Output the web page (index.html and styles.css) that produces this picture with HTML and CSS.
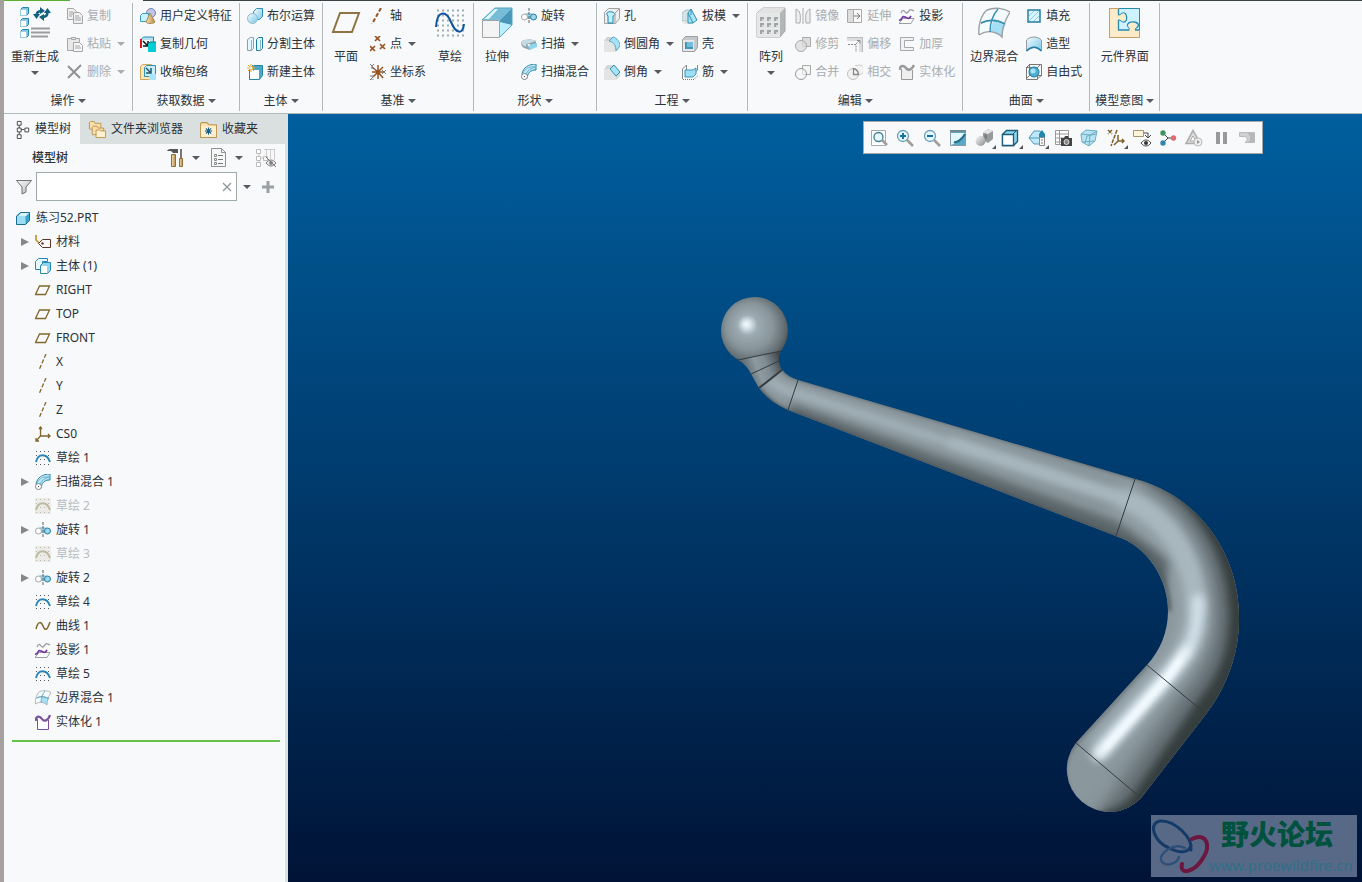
FILE: index.html
```
<!doctype html>
<html lang="zh-CN">
  <head>
    <meta charset="utf-8">
    <title>练习52.PRT</title>
    <link rel="stylesheet" href="styles.css">
  </head>
  <body>
    <svg class="sprite" aria-hidden="true">
      <defs>
        <linearGradient id="g-blue" x1="0" y1="0" x2="1" y2="1">
          <stop offset="0" stop-color="#f2fbff"/><stop offset="1" stop-color="#7cc8e6"/>
        </linearGradient>
        <linearGradient id="g-gray" x1="0" y1="0" x2="1" y2="1">
          <stop offset="0" stop-color="#fafafa"/><stop offset="1" stop-color="#b4b8ba"/>
        </linearGradient>
        <linearGradient id="g-metal" x1="0" y1="0" x2="1" y2="1">
          <stop offset="0" stop-color="#fafafa"/><stop offset="1" stop-color="#85898b"/>
        </linearGradient>
        <linearGradient id="g-tan" x1="0" y1="0" x2="1" y2="0">
          <stop offset="0" stop-color="#f6e2b8"/><stop offset="1" stop-color="#b58b49"/>
        </linearGradient>
      </defs>

      <!-- 32px ribbon icons -->
      <symbol id="i-regen" viewBox="0 0 32 32">
        <g stroke="#2387ae"><path d="M1.500 2.500l2-2h6v6l-2 2h-6zM1.500 13.500l2-2h6v6l-2 2h-6zM1.500 24.500l2-2h6v6l-2 2h-6z" fill="#7cc6e2"/><path d="M1.500 2.500h6v6h-6zM1.500 13.500h6v6h-6zM1.500 24.500h6v6h-6z" fill="#fff" stroke="#9bcbdc"/></g>
        <g fill="none" stroke="#12607f" stroke-width="2.500"><path d="M17.500 9c0-4 2-5 5-5"/><path d="M28.500 5c0 4-2 5-5 5"/></g>
        <path d="M14 7h7l-3.500 5zM25 6h7l-3.500-5zM21 0l5 4-5 3zM25 7v7l-5-4z" fill="#12607f"/>
        <path d="M12 21.500h19M12 25.500h19M12 29.500h17" stroke="#9c9c9c" stroke-width="2"/>
      </symbol>
      <symbol id="i-plane" viewBox="0 0 32 32"><path d="M10 6h19l-7 19H3z" fill="none" stroke="#8f7443" stroke-width="2"/></symbol>
      <symbol id="i-sketch" viewBox="0 0 32 32">
        <path d="M3 3.500h28M3 8.500h28M3 13.500h28M3 18.500h28M3 23.500h28M3 28.500h28" stroke="#9fadb0" stroke-width="2" stroke-dasharray="2 3"/>
        <path d="M2 20C3 3 12 3 17 15s12 13 13 2" fill="none" stroke="#10549f" stroke-width="2"/>
      </symbol>
      <symbol id="i-extrude" viewBox="0 0 32 32">
        <path d="M1 13L14 1h17v17L19 30z" fill="#d9f7ff"/><path d="M1 13L14 1h17L19 13z" fill="#78bdd7"/><path d="M31 1v17L19 30V13z" fill="#4897b8"/><path d="M19 30l12-12L19 15z" fill="#b9efff"/><path d="M3 12L14 2h3L8 12z" fill="#ddf8ff"/>
        <path d="M1.500 13.500h17v17h-17z" fill="#f4f4f4" stroke="#a4a4a4"/><path d="M1 13L14 1h17v17L19 30" fill="none" stroke="#53a5c5"/>
      </symbol>
      <symbol id="i-pattern" viewBox="0 0 32 32">
        <path d="M2 6l6-5h22v23l-5 6H2z" fill="#b4b7b8" stroke="#a4a7a8"/><path d="M2 6l6-5h22l-5 5z" fill="#e2e2e2"/><path d="M2 6h23v24H2z" fill="#e6e7e7"/>
        <path d="M5 12h18M5 18h18M5 25h18" stroke="#a2a5a6" stroke-width="4" stroke-dasharray="4 3"/><path d="M7 13h16M7 19h16M7 26h16" stroke="#d6d6d6" stroke-width="2" stroke-dasharray="2 5"/>
      </symbol>
      <symbol id="i-boundary" viewBox="0 0 32 32">
        <path d="M9 3c8-3 17-2 23 2-5 8-8 16-8 25-5-5-15-8-24-2C-1 18 3 8 9 3z" fill="#f4fbfe"/>
        <path d="M15 14c5 0 9 1 13 3-3 5-4 9-4 13-3-3-7-5-12-5z" fill="#a6def5"/>
        <path d="M9 3c8-3 17-2 23 2M9 3C3 8 0 18 1 28M3 16c8-4 17-3 24 1M1 28c9-6 18-3 23 2 0-9 3-17 8-25" fill="none" stroke="#9b9fa1" stroke-width="1.400"/><path d="M20 2c-6 7-8 15-8 23M3 16c8-4 17-3 24 1" fill="none" stroke="#2f91b6" stroke-width="1.400"/>
      </symbol>
      <symbol id="i-puzzle" viewBox="0 0 32 32">
        <path d="M.500 1.500h30v29H.500z" fill="#fcebc8" stroke="#c3a066"/><path d="M9 1.500h21.500V23H9z" fill="#cef2ff"/>
        <path d="M9.500 1.500V8c2 1 3-3 6-2 3 2 3 9-1 9-2 0-3-3-5-2v10h11c1-3-2-2-2-5 1-4 10-4 11 0 0 3-4 2-3 5h3.500" fill="none" stroke="#2589b1" stroke-width="1.300"/>
        <path d="M9 8.500c2 1 4-3 6-2 3 2 2 8-1 8-2 0-3-3-5-2zM20 23.500c2-3-1-3-1-5 1-4 8-4 9 0 0 2-3 3-2 5z" fill="#fcebc8"/>
        <path d="M.500 1.500h30v29H.500z" fill="none" stroke="#c3a066"/><path d="M10 1.500h20.500V23" fill="none" stroke="#2589b1"/>
      </symbol>

      <!-- 16px ribbon icons -->
      <symbol id="i-copy" viewBox="0 0 16 16"><g fill="#f0f0f0" stroke="#a6a6a6"><path d="M.500.500h6l3 3v8h-9z"/><path d="M6.500 4.500h6l3 3v8h-9z"/></g><path d="M2 4h4M2 6h4M2 8h3M8 8h4M8 10h6M8 12h6" stroke="#a6a6a6"/></symbol>
      <symbol id="i-paste" viewBox="0 0 16 16"><g fill="#e8e8e8" stroke="#a6a6a6"><path d="M.500 2.500h12v12H.500z"/><path d="M4.500 3.500v-2h4v2z"/><path d="M6.500 6.500h6l3 3v6h-9z" fill="#f7f7f7"/></g><path d="M8 10h5M8 12h6" stroke="#a6a6a6"/></symbol>
      <symbol id="i-delete" viewBox="0 0 16 16"><path d="M1 2l12 12M14 1L1 14" stroke="#929292" stroke-width="2"/></symbol>
      <symbol id="i-udf" viewBox="0 0 16 16"><circle cx="11" cy="5" r="4.500" fill="#c0c6e8" stroke="#7680b0"/><path d="M.500 7.500l2-2h6v6l-2 2h-6z" fill="#c8f1ff" stroke="#3b9bbf"/><path d="M10 5l5 9c-2 2-8 2-9 0z" fill="url(#g-tan)" stroke="#ac8a52"/></symbol>
      <symbol id="i-copygeom" viewBox="0 0 16 16"><path d="M.500 4l3-3h10v5" fill="#b7dfef" stroke="#278daf"/><path d="M2 4h8v8H2z" fill="#ebfaff"/><path d="M1 3v9" stroke="#e01414" stroke-width="2"/><path d="M3 5l4 4M8 5v5H3" stroke="#111" stroke-width="1.500" fill="none"/><path d="M8 8l2-2h6v10H8z" fill="#00cdd4"/><path d="M8 8l2-2h6" fill="none" stroke="#007c8a"/></symbol>
      <symbol id="i-shrink" viewBox="0 0 16 16"><path d="M.500 2.500l2-2h9v13l-2 2h-9z" fill="#fae8bd" stroke="#d2a857"/><path d="M4.500 3.500l2-2h9v9l-2 2h-9z" fill="#c9eefb" stroke="#338fb2"/><path d="M6 4l4 4M11 4v5H6" stroke="#205770" stroke-width="1.500" fill="none"/><path d="M9 12l2-2h5v6H9z" fill="#a9e3fb"/></symbol>
      <symbol id="i-bool" viewBox="0 0 16 16"><path d="M6.500 3.500l3-3h6v8l-3 3h-6z" fill="url(#g-blue)" stroke="#2b8fb3"/><circle cx="5.500" cy="10.500" r="5" fill="url(#g-blue)" stroke="#8ebacb"/></symbol>
      <symbol id="i-split" viewBox="0 0 16 16"><path d="M.500 3.500l3-2h3v11l-2 2h-4z" fill="#e2f7ff" stroke="#909fa6"/><path d="M9.500 3.500l2-2h4v11l-2 2h-4z" fill="#e2f9ff" stroke="#1c7da2"/><path d="M13.500 4v11M4.500 4v11" stroke="#8eb4c2"/></symbol>
      <symbol id="i-newbody" viewBox="0 0 16 16"><path d="M2.500 5.500l3-4h10v10l-3 4h-10z" fill="#4fa5c4" stroke="#2387ab"/><path d="M3 6h9v9H3z" fill="#fff"/><path d="M4 0v8M0 4h8M1 1l6 6M7 1L1 7" stroke="#f4a51c"/><circle cx="4" cy="4" r="1.500" fill="#fff3c9"/></symbol>
      <symbol id="i-axis" viewBox="0 0 16 16"><path d="M11 0L2 16" stroke="#975321" stroke-width="2" stroke-dasharray="4 2"/></symbol>
      <symbol id="i-point" viewBox="0 0 16 16"><path d="M5 0l5 5m0-5L5 5M0 10l5 5m0-5l-5 5M10 8l5 5m0-5l-5 5" stroke="#975321" stroke-width="1.700"/></symbol>
      <symbol id="i-csys" viewBox="0 0 16 16"><path d="M8 1v14M8 8l-6-5M2 8h11M8 8l5-5M8 8l-5 5M8 8l5 6" stroke="#975321" stroke-width="1.500" fill="none"/><path d="M0 0l2 2 2-2M2 2v3M12 6l4 4m0-4l-4 4M0 12h4l-4 4h4" stroke="#77797b" fill="none"/></symbol>
      <symbol id="i-revolve" viewBox="0 0 16 16"><path d="M3 7c2-3 8-3 11 1v3H3z" fill="#95d3e9"/><circle cx="3.500" cy="9" r="3" fill="#fff" stroke="#a5a8a9"/><circle cx="12.500" cy="9" r="3" fill="#9dd7ed" stroke="#2d7c9d"/><path d="M8 0v16" stroke="#5c6467" stroke-dasharray="3 1"/></symbol>
      <symbol id="i-sweep" viewBox="0 0 16 16"><path d="M0 6c4-3 9-3 15-1v3l-5 1c-4-3-5 0-1 2v3L3 12C0 10 0 8 0 6z" fill="#8ea5ad"/><path d="M0 6c4-3 9-3 15-1l-6 2C5 7 4 9 6 11 2 10 0 8 0 6z" fill="#c6dbe2"/><path d="M7 10l9-3v4l-7 3z" fill="#8dd6ee"/></symbol>
      <symbol id="i-sweepblend" viewBox="0 0 16 16"><path d="M1 10C2 4 7 0 15 0v6c-6 0-8 3-9 8z" fill="url(#g-blue)" stroke="#2d89ad"/><path d="M2 9c2-4 6-7 12-6M5 11c1-4 4-7 10-8" fill="none" stroke="#6fb6d0"/><circle cx="3.500" cy="12.500" r="3" fill="#fff" stroke="#7c878b"/><path d="M3 12h1v1H3z" fill="#555"/></symbol>
      <symbol id="i-hole" viewBox="0 0 16 16"><path d="M.500 4.500l4-4h11v10l-4 5h-11z" fill="#eee" stroke="#9da2a4"/><path d="M4 15V8c-3-3 0-5 4-4s3 4 1 4v7z" fill="#bdefff" stroke="#2386aa"/><path d="M11 5v10M11 5l4-4" stroke="#9da2a4"/></symbol>
      <symbol id="i-round" viewBox="0 0 16 16"><path d="M0 5h7c4 1 5 5 5 11H0z" fill="#e4e5e5"/><path d="M0 5l3-4h6L6 5z" fill="#cdd2d4"/><path d="M9 1c4 1 7 5 7 9l-4 5C12 9 10 6 5 5z" fill="#a9e2f6"/><path d="M12 15l4-5M5 5l4-4c4 1 7 5 7 9M5 5c5 1 7 5 7 10" fill="none" stroke="#54a5c3"/></symbol>
      <symbol id="i-chamfer" viewBox="0 0 16 16"><path d="M0 5h5l7 7v4H0z" fill="#e3e5e5"/><path d="M0 5l3-4h6l7 6v5l-4 4v-5L6 5z" fill="#d2d8da"/><path d="M6 5l4-4 6 7-4 4z" fill="#a9e3f7" stroke="#318eb0"/></symbol>
      <symbol id="i-draft" viewBox="0 0 16 16"><path d="M0 5l4-3h5v11H0z" fill="#d6e2e6" stroke="#9fc3d0"/><path d="M0 13h8l3 3H3z" fill="#dfe1e2"/><path d="M9 1l6 11-4 3H6V5z" fill="#a5e3f8" stroke="#318eb0"/><path d="M6 5l5 10M9 1v6" fill="none" stroke="#318eb0"/></symbol>
      <symbol id="i-shell" viewBox="0 0 16 16"><path d="M.500 3.500l3-3h12v11l-3 4h-12z" fill="#c4c8ca" stroke="#9b9fa1"/><path d="M1 4h11v11H1z" fill="#e6e7e7"/><path d="M3 6h8v7H3z" fill="#4596b5"/><path d="M5 6h6v5H5z" fill="#71bdda"/></symbol>
      <symbol id="i-rib" viewBox="0 0 16 16"><path d="M.500 15V5l4-4v9h7l4-4V1" fill="none" stroke="#85898b"/><path d="M3 6h8l3-2v6l-3 3H3z" fill="#9cdff6" stroke="#3994b6"/><path d="M1 15.500h11l4-4" fill="none" stroke="#777" stroke-dasharray="1 1"/></symbol>
      <symbol id="i-mirror" viewBox="0 0 16 16"><path d="M8 0v16" stroke="#aaa"/><path d="M1 1c4 2 5 5 4 14H1zM15 1c-4 2-5 5-4 14h4z" fill="#eee" stroke="#aaa"/></symbol>
      <symbol id="i-trim" viewBox="0 0 16 16"><path d="M7.500 1.500h8v9h-8z" fill="#ddd" stroke="#aaa"/><circle cx="6" cy="10" r="5.500" fill="#ddd" fill-opacity=".8" stroke="#aaa"/></symbol>
      <symbol id="i-merge" viewBox="0 0 16 16"><path d="M7.500 1.500h8v9h-8z" fill="#f5f5f5" stroke="#aaa"/><circle cx="6" cy="10" r="5.500" fill="#f5f5f5" fill-opacity=".6" stroke="#999"/></symbol>
      <symbol id="i-extend" viewBox="0 0 16 16"><path d="M.500 1.500h14v13H.500z" fill="#f8f8f8" stroke="#aaa"/><path d="M1 2h5v12H1z" fill="#ddd"/><path d="M6.500 2v12" stroke="#aaa"/><path d="M7 8h6m-3-3l3 3-3 3" fill="none" stroke="#777"/></symbol>
      <symbol id="i-offset" viewBox="0 0 16 16"><path d="M0 1h16v15h-4V5H0z" fill="#ddd"/><path d="M15.500 1v15M0 1.500h16" stroke="#bbb"/><path d="M1 8.500h8V16M9 8l4-4" fill="none" stroke="#888" stroke-dasharray="2 1"/><path d="M10 4.500h3v3" fill="none" stroke="#888"/></symbol>
      <symbol id="i-intersect" viewBox="0 0 16 16"><path d="M8 1.500h3a4 4 0 0 1 4 8L12 11" fill="#f2f2f2" stroke="#ccc"/><circle cx="6" cy="10" r="5.500" fill="#f2f2f2" stroke="#c0c0c0"/><path d="M6.500 4.500v6h5C11 7 9 5 6.500 4.500z" fill="#f7f7f7" stroke="#888" stroke-width="1.300"/></symbol>
      <symbol id="i-project" viewBox="0 0 16 16"><path d="M2 5c3-7 4 3 7-1s3-2 6-1" fill="none" stroke="#9b9fa1" stroke-width="1.300"/><path d="M4 10.500h11l-3 5H0z" fill="#fafafa" stroke="#9b9fa1"/><path d="M0 12c4 1 2-5 6-3s4 2 6-1" fill="none" stroke="#7135a0" stroke-width="1.700"/></symbol>
      <symbol id="i-thicken" viewBox="0 0 16 16"><path d="M1.500 1.500h13v3h-9v7h9v3h-13z" fill="#f3f3f3" stroke="#a8a8a8"/></symbol>
      <symbol id="i-solidify" viewBox="0 0 16 16"><path d="M2.500 5v10.500h11V6" fill="#eee" stroke="#999"/><path d="M.500 6C1 1 5 1 7 4s6 2 8-3" fill="none" stroke="#999" stroke-width="2.500"/></symbol>
      <symbol id="i-fill" viewBox="0 0 16 16"><path d="M2 2h12v12H2z" fill="#dcf6ff" stroke="#277ca0" stroke-width="1.500"/><path d="M3 8l5-5M3 13L13 3M8 13l5-5" stroke="#86cce6"/></symbol>
      <symbol id="i-style" viewBox="0 0 16 16"><path d="M.500 4c4-4 11-4 15 0v11c-4-5-10-5-15 0z" fill="url(#g-blue)" stroke="#969c9f"/><path d="M.500 15c5-5 10-5 15 0" fill="none" stroke="#237fa4" stroke-width="1.500"/></symbol>
      <symbol id="i-freestyle" viewBox="0 0 16 16"><path d="M.500 3.500h11v12H.500zM3.500.500h12v11h-12z" fill="#f6f6f6" fill-opacity=".5" stroke="#777"/><circle cx="8" cy="8" r="5" fill="#4eafcf" stroke="#237fa4"/><circle cx="7" cy="7" r="2.500" fill="#a9e4f5"/><path d="M0 4l4-4M11 15l5-4M0 15l4-4M11 4l4-4" stroke="#777"/></symbol>

      <!-- model tree icons -->
      <symbol id="i-tree" viewBox="0 0 15 20"><path d="M3.500 5v10M3 10h6" stroke="#444"/><path d="M1.500 1.500h4v4h-4zM1.500 8.500h4v4h-4zM9.500 8.500h4v4h-4zM1.500 15.500h4v4h-4z" fill="#fff" stroke="#444"/></symbol>
      <symbol id="i-folders" viewBox="0 0 20 20"><g fill="#fbdfaa" stroke="#bd9550"><path d="M1.500 9.500v-7l1-1h4l1 2h6v7z"/><path d="M4.500 13.500v-6l1-1h4l1 2h6v7h-12z"/><path d="M8.500 18.500v-8h4l1 1h5v7z" fill="#fff0cf"/></g></symbol>
      <symbol id="i-fav" viewBox="0 0 18 18"><path d="M1.500 16.500v-13l1-1h5l2 2h7v12z" fill="#fbe3b5" stroke="#bd9550"/><path d="M2 6h14v10H2z" fill="#fff0d0"/><path d="M9 7v7M5.500 10.500h7M6.500 8l5 5M11.500 8l-5 5" stroke="#135f8a"/></symbol>
      <symbol id="i-tools" viewBox="0 0 18 20"><path d="M0 3c1-2 3-2 5-2h6v4H6L4 3z" fill="#555"/><path d="M4.500 6.500h4v12h-4z" fill="url(#g-tan)" stroke="#926d35"/><path d="M14 1v9" stroke="#777" stroke-width="2"/><path d="M12.500 10.500h3v8h-3z" fill="url(#g-tan)" stroke="#926d35"/></symbol>
      <symbol id="i-settings" viewBox="0 0 18 20"><path d="M1.500.500h10l4 4v14h-14z" fill="#f6f7f7" stroke="#8c9193"/><path d="M11.500.500v4h4" fill="none" stroke="#8c9193"/><path d="M8 7.500h5M8 11.500h5M8 15.500h5" stroke="#777"/><path d="M4.500 6.500h2v2h-2zM4.500 10.500h2v2h-2zM4.500 14.500h2v2h-2z" fill="none" stroke="#888"/></symbol>
      <symbol id="i-hide" viewBox="0 0 20 20"><path d="M3 5v12M3 10h5M8 1.500h11M10.500 2v6M14.500 2v9M18.500 2v10" stroke="#ccc" fill="none"/><path d="M.500 1.500h4v4h-4zM.500 8.500h4v4h-4zM.500 14.500h4v4h-4zM7.500 8.500h4v4h-4z" fill="#fff" stroke="#bbb"/><path d="M10 15c3-4 7-4 10 0-3 4-7 4-10 0z" fill="#eee" stroke="#777"/><circle cx="15" cy="15" r="2" fill="#888"/><path d="M10 9l10 10" stroke="#777"/></symbol>
      <symbol id="i-filter" viewBox="0 0 16 16"><path d="M.500 1.500h15L10 8v5l-4 2V8z" fill="url(#g-gray)" stroke="#6e7375"/></symbol>
      <symbol id="i-part" viewBox="0 0 16 16"><path d="M1.500 6l4-3.500h9v8l-4 4h-9z" fill="#38a4ce" stroke="#1a6c90"/><path d="M2 6h8.500v8H2z" fill="#9eddf6"/><path d="M3 6l3-3h8l-3 3z" fill="#d7f3ff"/></symbol>
      <symbol id="i-material" viewBox="0 0 16 16"><path d="M1 1v5l3 3" fill="none" stroke="#bf972f" stroke-width="1.700"/><path d="M3.500 9.500l4-4h8v8h-8z" fill="#fffafa" stroke="#5b3730"/><circle cx="7.500" cy="9.500" r="1.200" fill="#5b3730"/></symbol>
      <symbol id="i-bodies" viewBox="0 0 16 16"><path d="M.500 3.500l3-3h9v3h-5v8h-7z" fill="#e6f8ff" stroke="#2988ad"/><path d="M5.500 7.500l3-3h7v8l-3 3h-7z" fill="#91d4ed" stroke="#2988ad"/><path d="M6 8h6v7H6z" fill="#fff"/></symbol>
      <symbol id="i-dplane" viewBox="0 0 16 16"><path d="M4.500 4h10l-4 8.500h-10z" fill="none" stroke="#80672d" stroke-width="1.300"/></symbol>
      <symbol id="i-daxis" viewBox="0 0 16 16"><path d="M11 0L4 16" stroke="#80672d" stroke-width="1.300" stroke-dasharray="4 2"/></symbol>
      <symbol id="i-dcsys" viewBox="0 0 16 16"><path d="M5.500 1v9H15M5.500 10L1 15M4 3l1.500-2L7 3M13 8l2 2-2 2M1 12v3h3" fill="none" stroke="#80672d" stroke-width="1.300"/></symbol>
      <symbol id="i-dsketch" viewBox="0 0 16 16"><path d="M1 1.500h15M1 5.500h15M1 9.500h15M1 14.500h15" stroke="#555" stroke-dasharray="1 3"/><path d="M1 12C3 3 12 3 15 12" fill="none" stroke="#2b87b2" stroke-width="2"/></symbol>
      <symbol id="i-dsketch-off" viewBox="0 0 16 16"><path d="M0 0h16v16H0z" fill="#ecebe8"/><path d="M1 1.500h15M1 5.500h15M1 9.500h15M1 14.500h15" stroke="#b9b7a9" stroke-dasharray="1 3"/><path d="M1 12C3 3 12 3 15 12" fill="none" stroke="#bcb9a0" stroke-width="2"/></symbol>
      <symbol id="i-curve" viewBox="0 0 16 16"><path d="M1 11C3 3 6 3 8 8s4 5 7-4" fill="none" stroke="#80672d" stroke-width="1.500"/></symbol>
      <symbol id="i-dsolid" viewBox="0 0 16 16"><path d="M2.500 5v10.500h11V6" fill="#fff" stroke="#7a519b"/><path d="M.500 7C1 1 5 2 7 5s6 2 8-4" fill="none" stroke="#7a519b" stroke-width="2.200"/></symbol>

      <!-- view toolbar icons -->
      <symbol id="v-refit" viewBox="0 0 18 18"><path d="M1.500 1.500h14v15h-14z" fill="#fff" stroke="#aaa"/><circle cx="8.500" cy="8" r="4.500" fill="#eaf8fd" stroke="#397e98" stroke-width="1.300"/><path d="M12 11l5 5" stroke="#a19c96" stroke-width="2.500"/></symbol>
      <symbol id="v-in" viewBox="0 0 18 18"><path d="M11 11l6 6" stroke="#a19c96" stroke-width="2.500"/><circle cx="7" cy="7" r="5.500" fill="#e4f7ff" stroke="#6fa0b3" stroke-width="1.300"/><path d="M4 7h6M7 4v6" stroke="#1673a0" stroke-width="2"/></symbol>
      <symbol id="v-out" viewBox="0 0 18 18"><path d="M11 11l6 6" stroke="#a19c96" stroke-width="2.500"/><circle cx="7" cy="7" r="5.500" fill="#e4f7ff" stroke="#6fa0b3" stroke-width="1.300"/><path d="M4 7h6" stroke="#1673a0" stroke-width="2"/></symbol>
      <symbol id="v-repaint" viewBox="0 0 18 18"><path d="M1.500 1.500h15v15h-15z" fill="#5ba9c5" stroke="#8a9ca3"/><path d="M2 4h14C14 9 11 13 2 16z" fill="#e3f7ff"/><path d="M1 2h16" stroke="#72898f" stroke-width="2"/><path d="M5 13c2 1 8-2 11-8" fill="none" stroke="#1c6b8c" stroke-width="2"/></symbol>
      <symbol id="v-shade" viewBox="0 0 18 18"><path d="M8 4l5-4 5 2v8l-5 4-5-3z" fill="#989b9d"/><path d="M8 4l5-4 5 2-5 3z" fill="#e3e4e4"/><path d="M10 4c4 3 2 8-3 10z" fill="#7c8082"/><circle cx="5.500" cy="12" r="5" fill="url(#g-metal)"/></symbol>
      <symbol id="v-box" viewBox="0 0 18 18"><path d="M1.500 5.500l4-4h11v11l-4 4h-11z" fill="#8fd4ee" stroke="#195b79" stroke-width="1.300"/><path d="M1.500 5.500h11v11h-11z" fill="#fff" stroke="#195b79" stroke-width="1.300"/><path d="M12 5l4-4" stroke="#195b79"/></symbol>
      <symbol id="v-style" viewBox="0 0 18 18"><path d="M1 9l5-7h6l4 5-2 8H6z" fill="#bfe9fa" stroke="#4b9aba"/><path d="M2 9h12" stroke="#4b9aba"/><path d="M11 9V5l3-4 3 4v4z" fill="#2487af"/><path d="M11.500 8.500h5v8h-5z" fill="#fafafa" stroke="#888"/><path d="M13 11h2M13 14h2" stroke="#777"/></symbol>
      <symbol id="v-camera" viewBox="0 0 18 18"><path d="M1.500 1.500h13v14h-13zM5.500 2v13M2 5h12M2 9h12M2 13h12" fill="#fff" stroke="#999"/><path d="M7 9h3l1-2h3l1 2h3v8H7z" fill="#444"/><circle cx="12.500" cy="13" r="2.500" fill="#888" stroke="#ddd"/></symbol>
      <symbol id="v-persp" viewBox="0 0 18 18"><path d="M1 5l5-4 11 1-2 10-6 5-7-4z" fill="#b7e4f4" stroke="#6eabc2"/><path d="M1 5l9 1-1 11M10 6l7-4M5 14l2-7 9-2M3 13l11-1" fill="none" stroke="#6eabc2"/></symbol>
      <symbol id="v-datum" viewBox="0 0 18 18"><path d="M1 1l4 4m0-4L1 5M10 1L4 17" stroke="#80602a" stroke-width="1.500" stroke-dasharray="4 1"/><path d="M11 6v6h6M11 12l-4 4M15 10l2 2-2 2" fill="none" stroke="#80602a" stroke-width="1.500"/></symbol>
      <symbol id="v-anno" viewBox="0 0 18 18"><path d="M.500 1.500h10v6H.500z" fill="#fff3d9" stroke="#a39472"/><path d="M11 4h4v5M12 6l3 3 3-3" fill="none" stroke="#444"/><path d="M8 14c3-4 7-4 10 0-3 4-7 4-10 0z" fill="#fff" stroke="#444"/><circle cx="13" cy="14" r="2" fill="#333"/></symbol>
      <symbol id="v-spin" viewBox="0 0 18 18"><path d="M4 4l5 5h6M9 9l-5 5" stroke="#444" fill="none"/><circle cx="4" cy="4" r="2.700" fill="#3d965c"/><circle cx="14.500" cy="9" r="2.700" fill="#e16b6e"/><circle cx="4" cy="14" r="2.700" fill="#3385ac"/></symbol>
      <symbol id="v-sim" viewBox="0 0 18 18"><path d="M8 1.500l7.500 13H1z" fill="#ddd" stroke="#aaa" stroke-width="1.500"/><path d="M8 7l3 5H5z" fill="#fff" stroke="#aaa"/><circle cx="13" cy="13" r="4" fill="#eee" stroke="#bbb"/><path d="M12 11l3 2-3 2z" fill="#999"/></symbol>
      <symbol id="v-pause" viewBox="0 0 18 18"><path d="M4 3h4v12H4zM11 3h4v12h-4z" fill="#999"/></symbol>
      <symbol id="v-result" viewBox="0 0 18 18"><path d="M1.500 3.500h15v10H7c3-2 3-6-1-6H1.500z" fill="#d0d0d0" stroke="#bbb"/><path d="M9 4c4 3 4 7 1 9h7V4z" fill="#b8b8b8"/></symbol>
    </svg>

    <header class="ribbon">
      <section class="group">
        <div class="group-body">
          <button class="big"><svg><use href="#i-regen"/></svg>重新生成<i class="arrow"></i></button>
          <div class="stack">
            <button class="cmd" disabled><svg><use href="#i-copy"/></svg>复制</button>
            <button class="cmd" disabled><svg><use href="#i-paste"/></svg>粘贴<i class="arrow"></i></button>
            <button class="cmd" disabled><svg><use href="#i-delete"/></svg>删除<i class="arrow"></i></button>
          </div>
        </div>
        <button class="group-title">操作<i class="arrow"></i></button>
      </section>
      <section class="group">
        <div class="group-body">
          <div class="stack">
            <button class="cmd"><svg><use href="#i-udf"/></svg>用户定义特征</button>
            <button class="cmd"><svg><use href="#i-copygeom"/></svg>复制几何</button>
            <button class="cmd"><svg><use href="#i-shrink"/></svg>收缩包络</button>
          </div>
        </div>
        <button class="group-title">获取数据<i class="arrow"></i></button>
      </section>
      <section class="group">
        <div class="group-body">
          <div class="stack">
            <button class="cmd"><svg><use href="#i-bool"/></svg>布尔运算</button>
            <button class="cmd"><svg><use href="#i-split"/></svg>分割主体</button>
            <button class="cmd"><svg><use href="#i-newbody"/></svg>新建主体</button>
          </div>
        </div>
        <button class="group-title">主体<i class="arrow"></i></button>
      </section>
      <section class="group">
        <div class="group-body">
          <button class="big"><svg><use href="#i-plane"/></svg>平面</button>
          <div class="stack">
            <button class="cmd"><svg><use href="#i-axis"/></svg>轴</button>
            <button class="cmd"><svg><use href="#i-point"/></svg>点<i class="arrow"></i></button>
            <button class="cmd"><svg><use href="#i-csys"/></svg>坐标系</button>
          </div>
          <button class="big"><svg><use href="#i-sketch"/></svg>草绘</button>
        </div>
        <button class="group-title">基准<i class="arrow"></i></button>
      </section>
      <section class="group">
        <div class="group-body">
          <button class="big"><svg><use href="#i-extrude"/></svg>拉伸</button>
          <div class="stack">
            <button class="cmd"><svg><use href="#i-revolve"/></svg>旋转</button>
            <button class="cmd"><svg><use href="#i-sweep"/></svg>扫描<i class="arrow"></i></button>
            <button class="cmd"><svg><use href="#i-sweepblend"/></svg>扫描混合</button>
          </div>
        </div>
        <button class="group-title">形状<i class="arrow"></i></button>
      </section>
      <section class="group">
        <div class="group-body">
          <div class="stack">
            <button class="cmd"><svg><use href="#i-hole"/></svg>孔</button>
            <button class="cmd"><svg><use href="#i-round"/></svg>倒圆角<i class="arrow"></i></button>
            <button class="cmd"><svg><use href="#i-chamfer"/></svg>倒角<i class="arrow"></i></button>
          </div>
          <div class="stack">
            <button class="cmd"><svg><use href="#i-draft"/></svg>拔模<i class="arrow"></i></button>
            <button class="cmd"><svg><use href="#i-shell"/></svg>壳</button>
            <button class="cmd"><svg><use href="#i-rib"/></svg>筋<i class="arrow"></i></button>
          </div>
        </div>
        <button class="group-title">工程<i class="arrow"></i></button>
      </section>
      <section class="group">
        <div class="group-body">
          <button class="big"><svg><use href="#i-pattern"/></svg>阵列<i class="arrow"></i></button>
          <div class="stack">
            <button class="cmd" disabled><svg><use href="#i-mirror"/></svg>镜像</button>
            <button class="cmd" disabled><svg><use href="#i-trim"/></svg>修剪</button>
            <button class="cmd" disabled><svg><use href="#i-merge"/></svg>合并</button>
          </div>
          <div class="stack">
            <button class="cmd" disabled><svg><use href="#i-extend"/></svg>延伸</button>
            <button class="cmd" disabled><svg><use href="#i-offset"/></svg>偏移</button>
            <button class="cmd" disabled><svg><use href="#i-intersect"/></svg>相交</button>
          </div>
          <div class="stack">
            <button class="cmd"><svg><use href="#i-project"/></svg>投影</button>
            <button class="cmd" disabled><svg><use href="#i-thicken"/></svg>加厚</button>
            <button class="cmd" disabled><svg><use href="#i-solidify"/></svg>实体化</button>
          </div>
        </div>
        <button class="group-title">编辑<i class="arrow"></i></button>
      </section>
      <section class="group">
        <div class="group-body">
          <button class="big"><svg><use href="#i-boundary"/></svg>边界混合</button>
          <div class="stack">
            <button class="cmd"><svg><use href="#i-fill"/></svg>填充</button>
            <button class="cmd"><svg><use href="#i-style"/></svg>造型</button>
            <button class="cmd"><svg><use href="#i-freestyle"/></svg>自由式</button>
          </div>
        </div>
        <button class="group-title">曲面<i class="arrow"></i></button>
      </section>
      <section class="group">
        <div class="group-body">
          <button class="big"><svg><use href="#i-puzzle"/></svg>元件界面</button>
        </div>
        <button class="group-title">模型意图<i class="arrow"></i></button>
      </section>
    </header>

    <main class="workspace">
      <aside class="panel">
        <nav class="tabs">
          <button class="tab active"><svg class="tree-ico"><use href="#i-tree"/></svg>模型树</button>
          <button class="tab"><svg><use href="#i-folders"/></svg>文件夹浏览器</button>
          <button class="tab"><svg><use href="#i-fav"/></svg>收藏夹</button>
        </nav>
        <div class="panel-head">
          <h2>模型树</h2>
          <button class="tool" aria-label="工具"><svg><use href="#i-tools"/></svg><i class="arrow"></i></button>
          <button class="tool" aria-label="设置"><svg><use href="#i-settings"/></svg><i class="arrow"></i></button>
          <button class="tool" aria-label="显示"><svg><use href="#i-hide"/></svg></button>
        </div>
        <div class="search">
          <svg class="ico"><use href="#i-filter"/></svg>
          <div class="search-box">
            <input type="text" aria-label="过滤">
            <button aria-label="清除"><svg viewBox="0 0 10 10"><path d="M1 1l8 8M9 1L1 9" stroke="#909697" stroke-width="1.300"/></svg></button>
          </div>
          <button class="search-more" aria-label="选项"><i class="arrow"></i></button>
          <button class="search-add" aria-label="添加"><svg viewBox="0 0 12 12"><path d="M6 0v12M0 6h12" stroke="#9b9fa1" stroke-width="3"/></svg></button>
        </div>
        <div class="root"><svg class="ico"><use href="#i-part"/></svg>练习52.PRT</div>
        <ul class="tree">
          <li><button class="twisty" aria-label="展开"></button><svg class="ico"><use href="#i-material"/></svg>材料</li>
          <li><button class="twisty" aria-label="展开"></button><svg class="ico"><use href="#i-bodies"/></svg>主体 (1)</li>
          <li><svg class="ico"><use href="#i-dplane"/></svg>RIGHT</li>
          <li><svg class="ico"><use href="#i-dplane"/></svg>TOP</li>
          <li><svg class="ico"><use href="#i-dplane"/></svg>FRONT</li>
          <li><svg class="ico"><use href="#i-daxis"/></svg>X</li>
          <li><svg class="ico"><use href="#i-daxis"/></svg>Y</li>
          <li><svg class="ico"><use href="#i-daxis"/></svg>Z</li>
          <li><svg class="ico"><use href="#i-dcsys"/></svg>CS0</li>
          <li><svg class="ico"><use href="#i-dsketch"/></svg>草绘 1</li>
          <li><button class="twisty" aria-label="展开"></button><svg class="ico"><use href="#i-sweepblend"/></svg>扫描混合 1</li>
          <li class="off"><svg class="ico"><use href="#i-dsketch-off"/></svg>草绘 2</li>
          <li><button class="twisty" aria-label="展开"></button><svg class="ico"><use href="#i-revolve"/></svg>旋转 1</li>
          <li class="off"><svg class="ico"><use href="#i-dsketch-off"/></svg>草绘 3</li>
          <li><button class="twisty" aria-label="展开"></button><svg class="ico"><use href="#i-revolve"/></svg>旋转 2</li>
          <li><svg class="ico"><use href="#i-dsketch"/></svg>草绘 4</li>
          <li><svg class="ico"><use href="#i-curve"/></svg>曲线 1</li>
          <li><svg class="ico"><use href="#i-project"/></svg>投影 1</li>
          <li><svg class="ico"><use href="#i-dsketch"/></svg>草绘 5</li>
          <li><svg class="ico"><use href="#i-boundary"/></svg>边界混合 1</li>
          <li><svg class="ico"><use href="#i-dsolid"/></svg>实体化 1</li>
        </ul>
      </aside>

      <section class="viewport">
        <svg class="model" viewBox="288 114 1074 768" preserveAspectRatio="xMidYMid meet">
          <defs>
            <radialGradient id="ball" gradientUnits="userSpaceOnUse" cx="752" cy="328" r="39" fx="746" fy="324">
              <stop offset="0" stop-color="#f2fbff"/><stop offset=".1" stop-color="#d8e4ea"/><stop offset=".26" stop-color="#9dabb2"/><stop offset=".6" stop-color="#87949a"/><stop offset=".85" stop-color="#646f74"/><stop offset="1" stop-color="#42484b"/>
            </radialGradient>
            <linearGradient id="neck" gradientUnits="userSpaceOnUse" x1="746" y1="376" x2="782" y2="361">
              <stop offset="0" stop-color="#59636a"/><stop offset=".35" stop-color="#8d9aa1"/><stop offset=".6" stop-color="#808c92"/><stop offset="1" stop-color="#3f4548"/>
            </linearGradient>
            <clipPath id="tube"><path d="M782 370Q788 377 798 380L1135 479C1197 495 1240 553 1239 619C1239 655 1226 688 1206 714L1141 798A42.600 42.600 0 0 1 1076 743L1147 665C1160 651 1168 632 1168 611C1168 578 1147 546 1116 536L788 410Q769 402 759 388Z"/></clipPath>
            <filter id="b2" filterUnits="userSpaceOnUse" x="700" y="280" width="600" height="560"><feGaussianBlur stdDeviation="2"/></filter>
            <filter id="b4" filterUnits="userSpaceOnUse" x="700" y="280" width="600" height="560"><feGaussianBlur stdDeviation="4"/></filter>
            <filter id="b8" filterUnits="userSpaceOnUse" x="700" y="280" width="600" height="560"><feGaussianBlur stdDeviation="8"/></filter>
          </defs>
          <circle cx="754.500" cy="330.500" r="33.500" fill="url(#ball)"/>
          <path d="M738 360Q747 365 751 374L759 388L782 370Q780 367 779 362Q778 356 781 351Z" fill="url(#neck)"/>
          <g clip-path="url(#tube)" fill="none" stroke-linejoin="round">
            <path d="M700 280h600v560H700z" fill="#8a979d"/>
            <!-- half tone on the outer side -->
            <path d="M1142 470L1260 520V700L1150 840H1080L1118 786L1180 698C1201 672 1213 650 1214 619C1214 565 1190 515 1142 486Z" fill="#636e73" filter="url(#b8)"/>
            <path d="M790 415L1116 540L1165 590L1170 560L1116 521L790 403Z" fill="#5b666b" filter="url(#b4)"/>
            <!-- light band along the axis -->
            <path d="M1120 497C1174 518 1196 568 1196 614C1194 645 1183 655 1170 671L1096 752" stroke="#abbac2" stroke-width="20" filter="url(#b8)"/>
            <path d="M768 378Q780 390 793 392L1127 500C1176 520 1196 568 1197 614" stroke="#a9b7bf" stroke-width="8" filter="url(#b4)"/>
            <path d="M950 442L1127 500C1176 520 1196 568 1197 614" stroke="#a9b7bf" stroke-width="10" filter="url(#b4)"/>
            <!-- shaded rims -->
            <path d="M782 366Q788 374 798 377L1135 476C1197 492 1242 553 1242 619" stroke="#525c61" stroke-width="6" filter="url(#b2)"/>
            <path d="M1150 474L1260 520V700L1150 840H1080L1104 812Q1122 808 1132 796L1194 706C1217 678 1228 655 1229 619C1230 560 1200 508 1150 474Z" fill="#363c3e" filter="url(#b4)"/>
            <path d="M1116 540L788 414Q768 405 756 389" stroke="#343a3c" stroke-width="7" filter="url(#b2)"/>
            <path d="M1169 611C1169 578 1148 546 1116 537L1000 492" stroke="#4f5a5f" stroke-width="4" filter="url(#b2)"/>
            <path d="M1147 665L1076 743A42.600 42.600 0 0 0 1108 815" stroke="#667278" stroke-width="4" filter="url(#b2)"/>
            <!-- specular streak -->
            <path d="M1198 600C1199 642 1185 655 1172 671L1098 754" stroke="#d3e2ea" stroke-width="12" stroke-linecap="round" filter="url(#b4)"/>
            <path d="M1186 651L1168 677L1100 754" stroke="#f4fcff" stroke-width="8" stroke-linecap="round" filter="url(#b4)"/>
            <path d="M1180 660L1168 677L1106 747" stroke="#f2fbff" stroke-width="5" stroke-linecap="round" filter="url(#b2)"/>
          </g>
          <g fill="none" stroke="#343b40"><path d="M738 360L781 351M751 374L779 361M798 380L788 410M1135 479L1116 536M1147 665L1206 714M1076 743L1141 798"/><path d="M759 388L782 370" stroke-width="2"/></g>
        </svg>

        <div class="viewbar">
          <button aria-label="重新调整"><svg><use href="#v-refit"/></svg></button>
          <button aria-label="放大"><svg><use href="#v-in"/></svg></button>
          <button aria-label="缩小"><svg><use href="#v-out"/></svg></button>
          <button aria-label="重画"><svg><use href="#v-repaint"/></svg></button>
          <button class="more" aria-label="渲染"><svg><use href="#v-shade"/></svg></button>
          <button class="more" aria-label="显示样式"><svg><use href="#v-box"/></svg></button>
          <button class="more" aria-label="已保存方向"><svg><use href="#v-style"/></svg></button>
          <button aria-label="视图管理器"><svg><use href="#v-camera"/></svg></button>
          <button aria-label="透视图"><svg><use href="#v-persp"/></svg></button>
          <button class="more" aria-label="基准显示"><svg><use href="#v-datum"/></svg></button>
          <button aria-label="注释显示"><svg><use href="#v-anno"/></svg></button>
          <button aria-label="旋转中心"><svg><use href="#v-spin"/></svg></button>
          <button aria-label="模拟"><svg><use href="#v-sim"/></svg></button>
          <button aria-label="暂停"><svg><use href="#v-pause"/></svg></button>
          <button aria-label="结果"><svg><use href="#v-result"/></svg></button>
        </div>

        <div class="watermark">
          <svg viewBox="0 0 58 56"><g fill="none" stroke-linecap="round"><path d="M40 32C42 20 24 2 9 3C-4 6 4 24 18 30C28 35 38 36 40 27" stroke="#143b67" stroke-width="3"/><path d="M34 30C22 24 8 36 10 42C14 50 26 46 28 39" stroke="#304f78" stroke-width="2.500"/><path d="M41 21C56 14 60 28 52 40C44 54 28 58 31 46" stroke="#6c1740" stroke-width="4"/></g></svg>
          <div class="mark-text"><strong>野火论坛</strong><span>www.proewildfire.cn</span></div>
        </div>
      </section>
    </main>
  </body>
</html>
```
FILE: styles.css
```
* {
  box-sizing: border-box;
}

body {
  margin: 0;
  height: 100vh;
  display: flex;
  flex-direction: column;
  overflow: hidden;
  border-left: 4px solid #a5a1a1;
  background: #f7f9fb;
  color: #2b3238;
  font: 12px/16px "Noto Sans", "Noto Sans CJK SC", sans-serif;
}

button {
  padding: 0;
  border: 0;
  background: none;
  color: inherit;
  font: inherit;
  white-space: nowrap;
}

svg {
  display: block;
  flex: none;
}

.sprite {
  position: absolute;
  width: 0;
  height: 0;
}

.ico {
  width: 16px;
  height: 16px;
}

.arrow {
  display: block;
  flex: none;
  border: 4px solid transparent;
  border-top-color: #555b60;
  border-bottom: 0;
}

/* ribbon */
.ribbon {
  display: flex;
  flex: none;
  border-bottom: 1px solid #b0bcbc;
  background: linear-gradient(90deg, #5aaf32 66px, #f7f9fb 66px, #f7f9fb 139px, #3c4347 139px) top / 100% 1px no-repeat;
}

.group {
  display: flex;
  flex-direction: column;
  margin: 3px 0 2px;
  border-right: 1px solid #b4b8bb;
}

.group-body {
  display: flex;
  justify-content: center;
  gap: 8px;
  margin-top: -1px;
  padding: 0 7px;
}

.group-title {
  display: flex;
  align-items: center;
  justify-content: center;
  gap: 3px;
  height: 25px;
  margin-top: auto;
  padding: 5px 5px 0;
}

.stack {
  display: grid;
  grid-auto-rows: 28px;
  justify-items: start;
}

.cmd {
  display: flex;
  align-items: center;
}

.cmd svg {
  width: 16px;
  height: 16px;
  margin-right: 4px;
}

.cmd .arrow {
  margin-left: 6px;
}

.cmd:disabled {
  color: #a9adb0;
}

.cmd:disabled .arrow {
  border-top-color: #a9adb0;
}

.big {
  display: flex;
  flex-direction: column;
  align-items: center;
  min-width: 32px;
  padding-top: 5px;
}

.big svg {
  width: 32px;
  height: 32px;
  margin-bottom: 10px;
}

.big .arrow {
  margin-top: 6px;
}

/* model tree panel */
.workspace {
  display: flex;
  flex: 1;
  min-height: 0;
}

.panel {
  flex: none;
  width: 284px;
  border-right: 3px solid #dae1e1;
}

.tabs {
  display: flex;
  height: 30px;
  background: #dae0e0;
}

.tab {
  display: flex;
  align-items: center;
  gap: 4px;
  padding: 0 8px;
}

.tab svg {
  width: 19px;
  height: 19px;
}

.tab .tree-ico {
  width: 16px;
}

.tab.active {
  padding: 0 9px 0 11px;
  background: #f7f9fb;
}

.panel-head {
  display: flex;
  align-items: center;
  gap: 10px;
  height: 28px;
  padding: 0 9px 0 28px;
}

.panel-head h2 {
  margin: 0 auto 0 0;
  font-size: 12px;
  font-weight: 500;
}

.tool {
  display: flex;
  align-items: center;
  gap: 7px;
}

.tool svg {
  width: 18px;
  height: 20px;
}

.tool:last-child {
  margin-left: 3px;
}

.tool:last-child svg {
  width: 20px;
}

.search {
  display: flex;
  align-items: center;
  padding: 0 11px 0 12px;
}

.search-box {
  display: flex;
  flex: 1;
  min-width: 0;
  height: 29px;
  margin: 0 6px 0 4px;
  border: 1px solid #9fabab;
  background: #fff;
}

.search-box input {
  flex: 1;
  min-width: 0;
  padding: 0 6px;
  border: 0;
  outline: 0;
  background: none;
  font: inherit;
}

.search-box svg {
  width: 10px;
  height: 10px;
  margin: 0 4px;
}

.search-add {
  margin-left: 11px;
}

.search-add svg {
  width: 12px;
  height: 12px;
}

.root {
  display: flex;
  align-items: center;
  gap: 5px;
  height: 24px;
  margin-top: 5px;
  padding-left: 11px;
}

.tree {
  margin: 0 5px 0 8px;
  padding: 0 0 6px;
  border-bottom: 2px solid #66c24a;
  list-style: none;
}

.tree li {
  display: flex;
  align-items: center;
  gap: 5px;
  height: 24px;
  padding-left: 23px;
}

.tree .off {
  color: #b9bcbe;
}

.twisty {
  width: 8px;
  margin: 0 1px 0 -14px;
  border: 4px solid transparent;
  border-left: 8px solid #858789;
  border-right: 0;
}

/* graphics area */
.viewport {
  position: relative;
  flex: 1;
  min-width: 0;
  background: linear-gradient(#005f9f, #001336);
}

.model {
  width: 100%;
  height: 100%;
}

.viewbar {
  position: absolute;
  top: 7px;
  right: 99px;
  display: flex;
  align-items: center;
  width: 400px;
  height: 33px;
  padding: 0 2px;
  border: 1px solid #a5a7a9;
  background: #f7f9fb;
}

.viewbar button {
  position: relative;
  display: flex;
  flex: 1;
  justify-content: center;
}

.viewbar svg {
  width: 18px;
  height: 18px;
}

.viewbar .more::after {
  content: "";
  position: absolute;
  right: 1px;
  bottom: -2px;
  border-bottom: 4px solid #555;
  border-left: 4px solid transparent;
}

.watermark {
  position: absolute;
  right: 5px;
  bottom: 5px;
  display: flex;
  align-items: center;
  width: 206px;
  height: 62px;
  background: #586987;
}

.watermark svg {
  width: 58px;
  height: 56px;
}

.mark-text {
  display: flex;
  flex-direction: column;
  color: #2f6f88;
  font-size: 15px;
  line-height: 24px;
}

.mark-text strong {
  padding-left: 12px;
  color: #00523f;
  font-size: 28px;
  font-weight: 900;
  line-height: 38px;
}
```
